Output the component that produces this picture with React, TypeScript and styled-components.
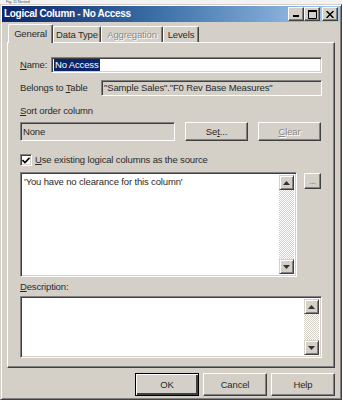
import styled, { createGlobalStyle } from "styled-components";

const GlobalStyle = createGlobalStyle`
  body, html {
    margin: 0;
    padding: 0;
    background: #fff;
  }
  #root {
    width: 342px;
    height: 400px;
    overflow: hidden;
    font: 9.5px/1.2 "Liberation Sans", Arial, sans-serif;
    letter-spacing: -0.15px;
    color: #2a2a2a;
  }
`;

const FACE = "#d4d0c8";

const Strip = styled.div`
  height: 4px;
  overflow: hidden;
  background: #f2f2f2;
  padding-left: 6px;
  font-size: 4px;
  line-height: 4px;
  color: #555;
`;

const Window = styled.div`
  box-sizing: border-box;
  height: 396px;
  display: flex;
  flex-direction: column;
  background: ${FACE};
  border: 1px solid ${FACE};
  border-right-color: #404040;
  border-bottom-color: #404040;
  box-shadow: inset 1px 1px #fff, inset -1px -1px #808080;
  padding: 1px;
`;

const TitleBar = styled.div`
  height: 16px;
  display: flex;
  align-items: center;
  padding: 0 2px 0 2px;
  background: linear-gradient(to right, #0a246a 0%, #3a6ea5 45%, #a6caf0 100%);
`;

const Title = styled.div`
  flex: 1;
  color: #fff;
  font-weight: bold;
  font-size: 10px;
  letter-spacing: -0.3px;
`;

const CaptionButton = styled.div<{ $gap?: number }>`
  box-sizing: border-box;
  width: 16px;
  height: 14px;
  margin-left: ${(p) => p.$gap ?? 0}px;
  background: ${FACE};
  border: 1px solid;
  border-color: #fff #404040 #404040 #fff;
  box-shadow: inset -1px -1px #808080;
  display: flex;
  align-items: center;
  justify-content: center;
`;

const Body = styled.div`
  flex: 1;
  display: flex;
  flex-direction: column;
  padding: 2px 5px 0 5px;
`;

const TabBar = styled.div`
  height: 18px;
  display: flex;
  align-items: flex-end;
  padding-left: 1px;
`;

const Tab = styled.div<{ $active?: boolean; $disabled?: boolean; $w: number }>`
  box-sizing: border-box;
  width: ${(p) => p.$w}px;
  height: ${(p) => (p.$active ? 19 : 16)}px;
  margin-bottom: ${(p) => (p.$active ? -1 : 0)}px;
  position: relative;
  z-index: ${(p) => (p.$active ? 1 : 0)};
  background: ${FACE};
  border-top: 1px solid #fff;
  border-left: 1px solid #fff;
  border-right: 1px solid #404040;
  box-shadow: inset -1px 0 #808080;
  border-radius: 2px 2px 0 0;
  display: flex;
  align-items: center;
  justify-content: center;
  padding-bottom: ${(p) => (p.$active ? 1 : 0)}px;
  color: ${(p) => (p.$disabled ? "#8a8a8a" : "#2a2a2a")};
  text-shadow: ${(p) => (p.$disabled ? "1px 1px #fff" : "none")};
`;

const Panel = styled.div`
  box-sizing: border-box;
  height: 326px;
  display: flex;
  flex-direction: column;
  padding: 14px 12px 0 12px;
  border: 1px solid #fff;
  border-right-color: #404040;
  border-bottom-color: #404040;
  box-shadow: inset -1px -1px #808080;
`;

const Row = styled.div<{ $h: number; $mt?: number }>`
  height: ${(p) => p.$h}px;
  margin-top: ${(p) => p.$mt ?? 0}px;
  display: flex;
  align-items: center;
`;

const Label = styled.div<{ $w?: number }>`
  width: ${(p) => (p.$w ? `${p.$w}px` : "auto")};
  flex-shrink: 0;
  white-space: nowrap;
`;

const Field = styled.div<{ $bg?: string; $w?: number }>`
  box-sizing: border-box;
  height: 100%;
  ${(p) => (p.$w ? `width: ${p.$w}px;` : "flex: 1;")}
  background: ${(p) => p.$bg ?? "#fff"};
  border: 1px solid;
  border-color: #808080 #fff #fff #808080;
  box-shadow: inset 1px 1px #404040, inset -1px -1px ${FACE};
  display: flex;
  align-items: center;
  padding-left: 2px;
  white-space: nowrap;
  overflow: hidden;
`;

const Selected = styled.span`
  background: #0a246a;
  color: #fff;
  padding: 0 1px;
`;

const Button = styled.div<{ $w: number; $disabled?: boolean; $default?: boolean }>`
  box-sizing: border-box;
  width: ${(p) => p.$w}px;
  height: 100%;
  flex-shrink: 0;
  background: ${FACE};
  border: 1px solid;
  border-color: ${(p) =>
    p.$default ? "#000" : "#fff #404040 #404040 #fff"};
  box-shadow: ${(p) =>
    p.$default
      ? "inset 1px 1px #fff, inset -2px -2px #404040, inset -2px -2px 0 0 #808080"
      : "inset -1px -1px #808080"};
  display: flex;
  align-items: center;
  justify-content: center;
  color: ${(p) => (p.$disabled ? "#8a8a8a" : "#2a2a2a")};
  text-shadow: ${(p) => (p.$disabled ? "1px 1px #fff" : "none")};
`;

const Spacer = styled.div<{ $w: number }>`
  width: ${(p) => p.$w}px;
  flex-shrink: 0;
`;

const Check = styled.div`
  box-sizing: border-box;
  width: 12px;
  height: 12px;
  margin-right: 3px;
  background: #fff;
  border: 1px solid;
  border-color: #808080 #fff #fff #808080;
  box-shadow: inset 1px 1px #404040, inset -1px -1px ${FACE};
  display: flex;
  align-items: center;
  justify-content: center;
`;

const TextArea = styled.div<{ $w?: number }>`
  box-sizing: border-box;
  height: 100%;
  ${(p) => (p.$w ? `width: ${p.$w}px;` : "flex: 1;")}
  background: #fff;
  border: 1px solid;
  border-color: #808080 #fff #fff #808080;
  box-shadow: inset 1px 1px #404040, inset -1px -1px ${FACE};
  padding: 2px;
  display: flex;
`;

const AreaText = styled.div`
  flex: 1;
  padding: 1px 0 0 1px;
`;

const ScrollBar = styled.div`
  width: 15px;
  display: flex;
  flex-direction: column;
  justify-content: space-between;
  background-color: #fff;
  background-image: repeating-conic-gradient(${FACE} 0 25%, #fff 0 50%);
  background-size: 2px 2px;
`;

const Arrow = styled.div`
  box-sizing: border-box;
  width: 15px;
  height: 15px;
  background: ${FACE};
  border: 1px solid;
  border-color: ${FACE} #404040 #404040 ${FACE};
  box-shadow: inset 1px 1px #fff, inset -1px -1px #808080;
  display: flex;
  align-items: center;
  justify-content: center;
`;

const SmallButton = styled.div`
  box-sizing: border-box;
  width: 17px;
  height: 16px;
  margin: 1px 0 0 7px;
  align-self: flex-start;
  background: ${FACE};
  border: 1px solid;
  border-color: #fff #404040 #404040 #fff;
  box-shadow: inset -1px -1px #808080;
  display: flex;
  align-items: flex-end;
  justify-content: center;
  padding-bottom: 2px;
  color: #555;
  font-size: 8px;
  line-height: 1;
`;

const Footer = styled.div`
  height: 23px;
  margin-top: 5px;
  display: flex;
  justify-content: flex-end;
  gap: 4px;
`;

const U = styled.span`
  text-decoration: underline;
`;

function ScrollArrow({ up }: { up?: boolean }) {
  return (
    <Arrow>
      <svg width="7" height="4" viewBox="0 0 7 4">
        <path d={up ? "M3.5 0 L7 4 L0 4 Z" : "M0 0 L7 0 L3.5 4 Z"} fill="#333" />
      </svg>
    </Arrow>
  );
}

function VScroll() {
  return (
    <ScrollBar>
      <ScrollArrow up />
      <ScrollArrow />
    </ScrollBar>
  );
}

export default function App() {
  return (
    <>
      <GlobalStyle />
      <Strip>Fig. 11 Nested</Strip>
      <Window>
        <TitleBar>
          <Title>Logical Column - No Access</Title>
          <CaptionButton>
            <svg width="8" height="8" viewBox="0 0 8 8">
              <rect x="1" y="5" width="6" height="2" fill="#000" />
            </svg>
          </CaptionButton>
          <CaptionButton>
            <svg width="9" height="9" viewBox="0 0 9 9">
              <path d="M0.5 0.5 H8.5 V8.5 H0.5 Z" fill="none" stroke="#000" />
              <rect x="0" y="0" width="9" height="2" fill="#000" />
            </svg>
          </CaptionButton>
          <CaptionButton $gap={2}>
            <svg width="8" height="7" viewBox="0 0 8 7">
              <path d="M0.5 0 L7.5 7 M7.5 0 L0.5 7" stroke="#000" strokeWidth="1.5" />
            </svg>
          </CaptionButton>
        </TitleBar>
        <Body>
          <TabBar>
            <Tab $active $w={45}>General</Tab>
            <Tab $w={48}>Data Type</Tab>
            <Tab $disabled $w={62}>Aggregation</Tab>
            <Tab $w={36}>Levels</Tab>
          </TabBar>
          <Panel>
            <Row $h={16}>
              <Label $w={31}>
                <U>N</U>ame:
              </Label>
              <Field>
                <Selected>No Access</Selected>
              </Field>
            </Row>
            <Row $h={16} $mt={7}>
              <Label $w={81}>
                Belongs to <U>T</U>able
              </Label>
              <Field $bg={FACE}>"Sample Sales"."F0 Rev Base Measures"</Field>
            </Row>
            <Row $h={12} $mt={9}>
              <Label>
                <U>S</U>ort order column
              </Label>
            </Row>
            <Row $h={19} $mt={5}>
              <Field $bg={FACE} $w={155}>None</Field>
              <Spacer $w={10} />
              <Button $w={63}>
                Se<U>t</U>...
              </Button>
              <Spacer $w={10} />
              <Button $w={63} $disabled>
                <U>C</U>lear
              </Button>
            </Row>
            <Row $h={12} $mt={13}>
              <Check>
                <svg width="8" height="7" viewBox="0 0 8 7">
                  <path d="M0.5 3 L3 5.5 L7.5 0.8" fill="none" stroke="#000" strokeWidth="1.6" />
                </svg>
              </Check>
              <Label>
                <U>U</U>se existing logical columns as the source
              </Label>
            </Row>
            <Row $h={105} $mt={6}>
              <TextArea $w={277}>
                <AreaText>'You have no clearance for this column'</AreaText>
                <VScroll />
              </TextArea>
              <SmallButton>...</SmallButton>
            </Row>
            <Row $h={12} $mt={4}>
              <Label>
                <U>D</U>escription:
              </Label>
            </Row>
            <Row $h={62} $mt={3}>
              <TextArea>
                <AreaText />
                <VScroll />
              </TextArea>
            </Row>
          </Panel>
          <Footer>
            <Button $w={64} $default>OK</Button>
            <Button $w={64}>Cancel</Button>
            <Button $w={64}>Help</Button>
          </Footer>
        </Body>
      </Window>
    </>
  );
}
